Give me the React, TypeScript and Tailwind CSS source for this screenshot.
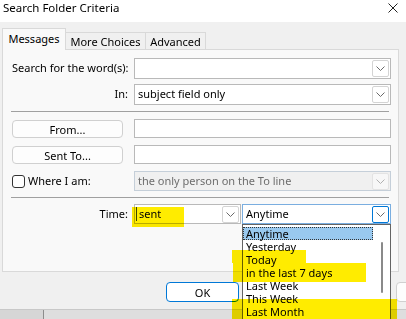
import React from "react";

function Chevron({ color = "#6b6b6b" }: { color?: string }) {
  return (
    <svg width="9" height="5" viewBox="0 0 9 5" fill="none">
      <polyline points="0.5,0.5 4.5,4.5 8.5,0.5" stroke={color} strokeWidth="1" />
    </svg>
  );
}

function DropBtn({ blue = false, faded = false }: { blue?: boolean; faded?: boolean }) {
  return (
    <div
      className={
        blue
          ? "w-[17px] h-[17px] mr-px flex items-center justify-center border border-[#0078d7] bg-white rounded-[2px]"
          : faded
          ? "w-[17px] h-[17px] mr-px flex items-center justify-center border border-[#e3e3e3] bg-[#f7f7f7] rounded-[2px]"
          : "w-[17px] h-[17px] mr-px flex items-center justify-center border border-[#d4d4d4] bg-white rounded-[2px]"
      }
    >
      <Chevron color={faded ? "#b0b0b0" : "#6b6b6b"} />
    </div>
  );
}

export default function App() {
  const items = ["Anytime", "Yesterday", "Today", "in the last 7 days", "Last Week", "This Week", "Last Month"];
  return (
    <div className="relative w-[406px] h-[319px] overflow-hidden bg-[#dcdcdc] font-['Noto_Sans',sans-serif] text-[11px] text-black">
      <div className="h-[309px] bg-[#f0f0f0] flex flex-col">
        {/* title bar */}
        <div className="h-[22px] bg-white flex justify-between items-start">
          <div className="pl-[3px] pt-px leading-[14px] text-[11.5px]">Search Folder Criteria</div>
          <div className="pr-[8px] pt-[3px]">
            <svg width="10" height="10" viewBox="0 0 10 10">
              <path d="M0.5 0.5 L9.5 9.5 M9.5 0.5 L0.5 9.5" stroke="#222" strokeWidth="1" />
            </svg>
          </div>
        </div>
        {/* tabs */}
        <div className="h-[27px] flex items-end pl-[2px]">
          <div className="relative z-10 -mb-px w-[64px] h-[22px] bg-[#f9f9f9] border border-b-0 border-[#d9d9d9] flex items-center justify-center leading-none pb-[2px]">
            Messages
          </div>
          <div className="w-[80px] h-[17px] bg-[#f0f0f0] border border-l-0 border-b-0 border-[#d9d9d9] flex items-center justify-center leading-none">
            More Choices
          </div>
          <div className="w-[60px] h-[17px] bg-[#f0f0f0] border border-l-0 border-b-0 border-[#d9d9d9] flex items-center justify-center leading-none">
            Advanced
          </div>
        </div>
        {/* panel */}
        <div className="ml-[2px] w-[397px] h-[223px] border border-[#d9d9d9] bg-[#f9f9f9] pl-[9px] flex flex-col">
          <div className="mt-[8px] h-[21px] flex items-center">
            <div className="w-[116px] text-right whitespace-nowrap">Search for the word(s):</div>
            <div className="ml-[6px] w-[257px] h-[21px] border border-[#b9b9b9] bg-white flex items-center justify-end">
              <DropBtn />
            </div>
          </div>
          <div className="mt-[5px] h-[21px] flex items-center">
            <div className="w-[116px] text-right whitespace-nowrap">In:</div>
            <div className="ml-[6px] w-[257px] h-[21px] border border-[#b9b9b9] bg-white flex items-center justify-between">
              <span className="pl-[3px]">subject field only</span>
              <DropBtn />
            </div>
          </div>
          <div className="mt-[6px] ml-[-1px] w-[378px] h-px bg-[#a0a0a0]" />
          <div className="mt-[7px] h-[19px] flex items-start">
            <div className="mt-px w-[111px] h-[18px] border border-[#d0d0d0] rounded-[4px] bg-[#fdfdfd] flex items-center justify-center leading-none">
              From...
            </div>
            <div className="ml-[11px] w-[257px] h-[19px] border border-[#b9b9b9] bg-white" />
          </div>
          <div className="mt-[7px] h-[19px] flex items-start">
            <div className="mt-px w-[111px] h-[18px] border border-[#d0d0d0] rounded-[4px] bg-[#fdfdfd] flex items-center justify-center leading-none">
              Sent To...
            </div>
            <div className="ml-[11px] w-[257px] h-[19px] border border-[#b9b9b9] bg-white" />
          </div>
          <div className="mt-[7px] h-[20px] flex items-center">
            <div className="w-[122px] flex items-center">
              <div className="w-[13px] h-[13px] border border-[#333] rounded-[3px] bg-white" />
              <span className="ml-[3px]">Where I am:</span>
            </div>
            <div className="w-[257px] h-[20px] border border-[#c5cfd9] bg-[#f0f0f0] flex items-center justify-between">
              <span className="pl-[3px] text-[#6d6d6d]">the only person on the To line</span>
              <DropBtn faded />
            </div>
          </div>
          <div className="mt-[6px] ml-[-1px] w-[378px] h-px bg-[#a0a0a0]" />
          <div className="mt-[6px] h-[20px] flex items-center">
            <div className="w-[116px] text-right whitespace-nowrap">Time:</div>
            <div className="ml-[6px] w-[107px] h-[20px] border border-[#b9b9b9] bg-white flex items-center justify-between">
              <div className="flex items-center">
                <div className="ml-px w-px h-[14px] bg-[#3a4a3a]" />
                <span className="pl-[2px]">sent</span>
              </div>
              <DropBtn />
            </div>
            <div className="ml-px w-[149px] h-[20px] border border-[#7aaee0] bg-white flex items-center justify-between">
              <span className="pl-[3px]">Anytime</span>
              <DropBtn blue />
            </div>
          </div>
        </div>
        {/* buttons */}
        <div className="mt-[10px] flex">
          <div className="ml-[166px] shrink-0 w-[73px] h-[20px] border border-[#0078d7] rounded-[4px] bg-white flex items-center justify-center leading-none">
            OK
          </div>
          <div className="ml-[157px] shrink-0 w-[73px] h-[20px] border border-[#d0d0d0] rounded-[4px] bg-[#fdfdfd]" />
        </div>
      </div>
      {/* background below dialog */}
      <div className="h-[10px] flex border-t border-[#c8c8c8]">
        <div className="w-[43px] bg-[#d6d6d6]" />
        <div className="w-px bg-[#8c8c8c]" />
        <div className="flex-1 bg-[#dedede]" />
      </div>

      {/* open dropdown list */}
      <div className="absolute left-[242px] top-[224px] w-[149px] h-[100px] border border-[#646464] bg-white flex">
        <div className="w-[130px] pt-[2px]">
          {items.map((it, i) => (
            <div
              key={it}
              className={
                i === 0
                  ? "h-[13px] leading-[11px] pl-[2px] bg-[#99c9ef] border border-dotted border-[#333] whitespace-nowrap"
                  : "h-[13px] leading-[13px] pl-[3px] whitespace-nowrap"
              }
            >
              {it}
            </div>
          ))}
        </div>
        <div className="flex-1 flex justify-center">
          <div className="mt-[17px] ml-[1px] w-[2px] h-[51px] bg-[#8a8a8a] rounded-full" />
        </div>
      </div>

      {/* highlighter marks */}
      <div className="absolute left-[132px] top-[207px] w-[52px] h-[20px] bg-[#ffec00] mix-blend-multiply" />
      <div className="absolute left-[232px] top-[250px] w-[74px] h-[13px] bg-[#ffec00] mix-blend-multiply" />
      <div className="absolute left-[233px] top-[263px] w-[133px] h-[19px] bg-[#ffec00] mix-blend-multiply" />
      <div className="absolute left-[232px] top-[299px] w-[165px] h-[20px] bg-[#ffec00] mix-blend-multiply" />
    </div>
  );
}
